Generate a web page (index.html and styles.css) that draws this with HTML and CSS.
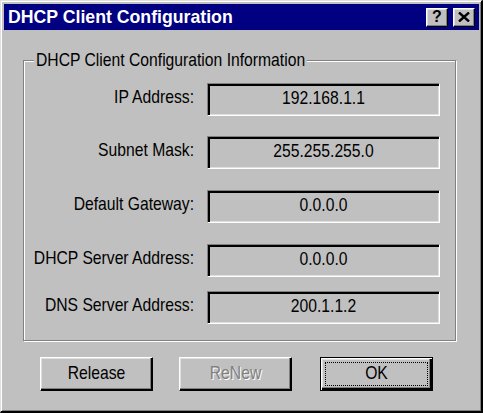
FILE: index.html
```html
<!DOCTYPE html>
<html>
<head>
<meta charset="utf-8">
<link rel="stylesheet" href="styles.css">
</head>
<body>
<div class="window">
  <div class="titlebar">
    <span class="title">DHCP Client Configuration</span>
    <div class="tb-btns">
      <span class="tb-btn help">?</span>
      <span class="tb-btn close"><svg width="12" height="10" viewBox="0 0 12 10"><path d="M1 0.5 L11 9.5 M11 0.5 L1 9.5" stroke="#000" stroke-width="2.4" fill="none"/></svg></span>
    </div>
  </div>
  <div class="content">
    <div class="group">
      <span class="legend"><span class="tall">DHCP Client Configuration Information</span></span>
      <div class="rows">
        <div class="row"><span class="label"><span class="tall">IP Address:</span></span><span class="field"><span class="tall">192.168.1.1</span></span></div>
        <div class="row gap20"><span class="label"><span class="tall">Subnet Mask:</span></span><span class="field"><span class="tall">255.255.255.0</span></span></div>
        <div class="row"><span class="label"><span class="tall">Default Gateway:</span></span><span class="field"><span class="tall">0.0.0.0</span></span></div>
        <div class="row"><span class="label"><span class="tall">DHCP Server Address:</span></span><span class="field"><span class="tall">0.0.0.0</span></span></div>
        <div class="row gap14"><span class="label"><span class="tall">DNS Server Address:</span></span><span class="field"><span class="tall">200.1.1.2</span></span></div>
      </div>
    </div>
    <div class="buttons">
      <button class="btn"><span class="tall">Release</span></button>
      <button class="btn disabled"><span class="tall">ReNew</span></button>
      <button class="btn default"><span class="focus"><span class="tall">OK</span></span></button>
    </div>
  </div>
</div>
</body>
</html>
```
FILE: styles.css
```css
html, body {
  margin: 0;
  background: #c0c0c0;
}

.window {
  width: 483px;
  height: 413px;
  box-sizing: border-box;
  background: #c0c0c0;
  border-top: 1px solid #dfdfdf;
  border-left: 1px solid #dfdfdf;
  border-right: 2px solid #000;
  border-bottom: 2px solid #000;
  box-shadow: inset 1px 1px 0 #fff, inset -1px -1px 0 #808080;
  padding: 3px 2px 0 3px;
  display: flex;
  flex-direction: column;
  font-family: "Liberation Sans", Arial, sans-serif;
  font-size: 15.7px;
  color: #000;
}

.tall {
  display: inline-block;
  transform: scaleY(1.22);
  white-space: nowrap;
}

.titlebar {
  height: 26px;
  background: #000080;
  display: flex;
  align-items: center;
  padding: 0 4px;
}

.title {
  font-weight: bold;
  font-size: 17.7px;
  color: #fff;
  display: inline-block;
  transform: scaleY(1.08);
}

.tb-btns {
  margin-left: auto;
  display: flex;
  gap: 5px;
}

.tb-btn {
  width: 22px;
  height: 19px;
  box-sizing: border-box;
  background: #c0c0c0;
  border: 1px solid;
  border-color: #fff #000 #000 #fff;
  box-shadow: inset -1px -1px 0 #808080, inset 1px 1px 0 #dfdfdf;
  display: flex;
  align-items: center;
  justify-content: center;
}

.help {
  font-weight: bold;
  font-size: 16px;
  line-height: 1;
}

.content {
  display: flex;
  flex-direction: column;
}

.group {
  position: relative;
  margin: 30px 0 0 19px;
  width: 433px;
  box-sizing: border-box;
  border: 1px solid #808080;
  box-shadow: inset 1px 1px 0 #fff, 1px 1px 0 #fff;
  padding: 22px 0 16px 0;
}

.legend {
  position: absolute;
  top: -13px;
  left: 10px;
  padding: 0 2px;
  background: #c0c0c0;
  line-height: 24px;
}

.rows {
  display: flex;
  flex-direction: column;
}

.row {
  display: grid;
  grid-template-columns: 170px 233px;
  column-gap: 13px;
  align-items: center;
  margin-top: 21px;
}

.row:first-child {
  margin-top: 0;
}

.row.gap20 {
  margin-top: 20px;
}

.row.gap14 {
  margin-top: 14px;
}

.label {
  text-align: right;
  padding-bottom: 5px;
  white-space: nowrap;
}

.field {
  height: 33px;
  box-sizing: border-box;
  border: 1px solid;
  border-color: #808080 #fff #fff #808080;
  box-shadow: inset 2px 2px 0 #000, inset -1px -1px 0 #dfdfdf;
  display: flex;
  align-items: center;
  justify-content: center;
  padding-bottom: 4px;
}

.buttons {
  display: flex;
  margin: 16px 0 0 36px;
}

.btn {
  width: 113px;
  height: 34px;
  box-sizing: border-box;
  margin: 0 26px 0 0;
  padding: 0 0 2px 0;
  font: inherit;
  color: #000;
  background: #c0c0c0;
  border: 1px solid;
  border-color: #fff #000 #000 #fff;
  box-shadow: inset -1px -1px 0 #000, inset -2px -2px 0 #808080, inset 1px 1px 0 #dfdfdf;
  display: flex;
  align-items: center;
  justify-content: center;
}

.btn.disabled {
  color: #808080;
  text-shadow: 1px 1px 0 #fff;
  margin-right: 28px;
}

.btn.default {
  border: 1px solid #000;
  box-shadow: inset 1px 1px 0 #fff, inset -2px -2px 0 #000, inset -3px -3px 0 #808080, inset 2px 2px 0 #dfdfdf;
  padding: 4px;
}

.focus {
  flex: 1;
  align-self: stretch;
  border: 1px dotted #000;
  display: flex;
  align-items: center;
  justify-content: center;
  padding-bottom: 2px;
}
```
